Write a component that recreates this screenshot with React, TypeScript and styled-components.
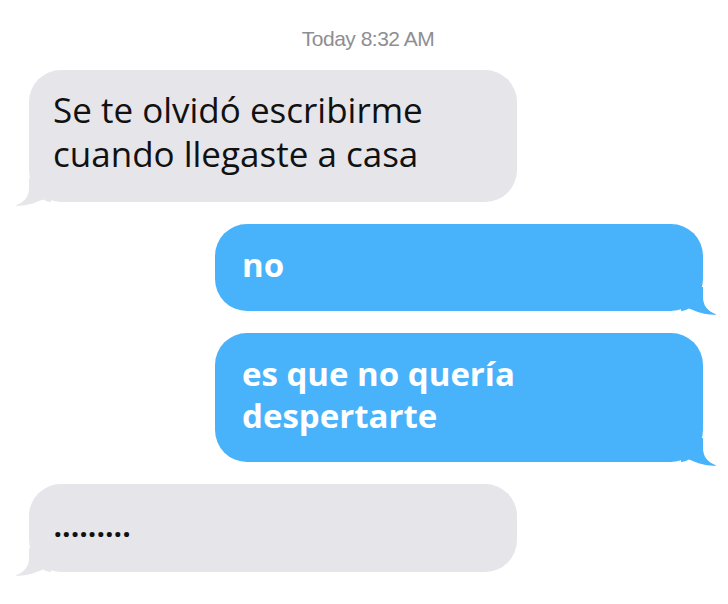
import styled, { createGlobalStyle } from "styled-components";

const GlobalStyle = createGlobalStyle`
  html, body {
    margin: 0;
    padding: 0;
    background: #ffffff;
  }
  * {
    box-sizing: border-box;
  }
`;

const GRAY = "#e5e5ea";
const BLUE = "#48b3fb";

const Thread = styled.div`
  width: 728px;
  height: 604px;
  padding: 27px 25px 0 29px;
  display: flex;
  flex-direction: column;
  gap: 22px;
  font-family: "Open Sans", "Noto Sans", sans-serif;
  overflow: hidden;
`;

const Stamp = styled.div`
  text-align: center;
  margin-bottom: -3px;
  padding-left: 4px;
  font-family: "Liberation Sans", Arial, sans-serif;
  font-size: 21px;
  line-height: 24px;
  letter-spacing: -0.5px;
  color: #8e8e93;
`;

const Row = styled.div<{ mine?: boolean }>`
  display: flex;
  justify-content: ${(p) => (p.mine ? "flex-end" : "flex-start")};
`;

// sent bubbles: bold white, a bit tighter line height
const Bubble = styled.div<{ mine?: boolean }>`
  position: relative;
  width: 488px;
  padding: ${(p) => (p.mine ? "20px 24px 25px 27px" : "18px 24px 26px 24px")};
  border-radius: 32px;
  background: ${(p) => (p.mine ? BLUE : GRAY)};
  color: ${(p) => (p.mine ? "#ffffff" : "#111111")};
  font-size: ${(p) => (p.mine ? "33px" : "35px")};
  font-weight: ${(p) => (p.mine ? 700 : 400)};
  line-height: ${(p) => (p.mine ? "42px" : "44px")};
`;

const Dots = styled.span`
  letter-spacing: -1px;
  font-weight: 600;
`;

const TailSvg = styled.svg<{ mine?: boolean }>`
  position: absolute;
  bottom: -4px;
  width: 36px;
  height: 28px;
  ${(p) => (p.mine ? "right: -14px;" : "left: -14px; transform: scaleX(-1);")}
`;

function Tail({ mine }: { mine?: boolean }) {
  return (
    <TailSvg mine={mine} viewBox="0 0 36 28">
      <path
        d="M0 0 H22 V10 C22 18 26 24 35.5 27.5 C28 28.5 18 26 8 21.5 C5 23 3 24 0 24 Z"
        fill={mine ? BLUE : GRAY}
      />
    </TailSvg>
  );
}

const messages = [
  { mine: false, text: ["Se te olvidó escribirme", "cuando llegaste a casa"] },
  { mine: true, text: ["no"] },
  { mine: true, text: ["es que no quería", "despertarte"] },
];

function App() {
  return (
    <>
      <GlobalStyle />
      <Thread>
        <Stamp>Today 8:32 AM</Stamp>
        {messages.map((m, i) => (
          <Row key={i} mine={m.mine}>
            <Bubble mine={m.mine}>
              {m.text.map((line, j) => (
                <div key={j}>{line}</div>
              ))}
              <Tail mine={m.mine} />
            </Bubble>
          </Row>
        ))}
        <Row>
          <Bubble>
            <Dots>.........</Dots>
            <Tail />
          </Bubble>
        </Row>
      </Thread>
    </>
  );
}

export default App;
